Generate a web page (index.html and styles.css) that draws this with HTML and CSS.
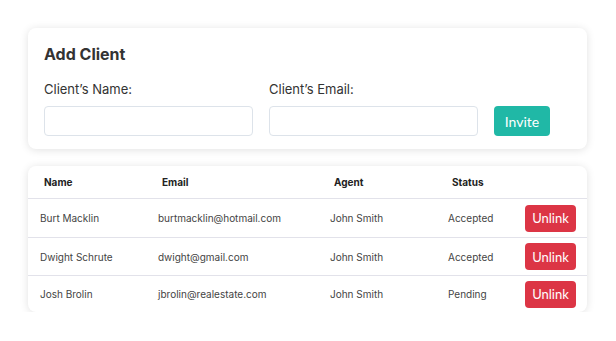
FILE: index.html
```html
<!DOCTYPE html>
<html lang="en">
<head>
<meta charset="UTF-8" /><meta name="viewport"
content="width=device-width, initial-scale=1.0" />
<title>Clients</title>
<link rel="stylesheet" href="styles.css">
</head>
<body>
<div class="card add">
<h2>Add Client</h2>
<div class="form">
<label class="field">Client’s Name:<input type="text"></label>
<label class="field">Client’s Email:<input type="email"></label>
<button class="btn invite">Invite</button>
</div>
</div>
<div class="card list">
<table>
<colgroup><col class="c-name"><col class="c-email"><col class="c-agent"><col class="c-status"><col></colgroup>
<thead>
<tr><th>Name</th><th>Email</th><th>Agent</th><th>Status</th><th></th></tr>
</thead>
<tbody>
<tr><td>Burt Macklin</td><td>burtmacklin@hotmail.com</td><td>John Smith</td><td>Accepted</td><td><button class="btn unlink">Unlink</button></td></tr>
<tr><td>Dwight Schrute</td><td>dwight@gmail.com</td><td>John Smith</td><td>Accepted</td><td><button class="btn unlink">Unlink</button></td></tr>
<tr><td>Josh Brolin</td><td>jbrolin@realestate.com</td><td>John Smith</td><td>Pending</td><td><button class="btn unlink">Unlink</button></td></tr>
</tbody>
</table>
</div>
</body>
</html>
```
FILE: styles.css
```css
body { margin: 0; padding: 28px 29px 0 28px; background: #fff; font-family: Inter, "Noto Sans", sans-serif; color: #333; }
.card { background: #fff; border-radius: 8px; box-shadow: 0 1px 8px rgba(0,0,0,0.12); }
.add { padding: 16px 16px 14px; height: 121px; box-sizing: border-box; }
.add h2 { margin: 0; font-size: 16px; font-weight: 700; line-height: 20px; color: #333; }
.form { display: flex; align-items: flex-end; margin-top: 17px; }
.field { display: flex; flex-direction: column; gap: 9px; width: 209px; margin-right: 16px; font-size: 13px; line-height: 16px; color: #333; }
.field input { height: 30px; box-sizing: border-box; border: 1px solid #dde3ea; border-radius: 4px; padding: 0 8px; font-size: 13px; }
.btn { border: none; color: #fff; font-family: Lato, sans-serif; cursor: pointer; border-radius: 4px; }
.invite { background: #20b8a6; width: 56px; height: 30px; font-size: 14px; padding: 0; }
.list { margin-top: 17px; overflow: hidden; }
table { width: 100%; border-collapse: collapse; table-layout: fixed; font-size: 10px; }
th { text-align: left; font-weight: 700; color: #222; height: 32px; padding: 0 0 0 16px; border-bottom: 1px solid #e2e2ea; }
td { height: 38px; padding: 0 0 0 12px; color: #444; border-bottom: 1px solid #e2e2ea; white-space: nowrap; }
tbody tr:nth-child(2) td { height: 37px; }
tbody tr:last-child td { border-bottom: none; height: 36px; }
.c-name { width: 118px; }
.c-email { width: 172px; }
.c-agent { width: 118px; }
.c-status { width: 76px; }
td:last-child { padding: 0 11px 0 0; text-align: right; }
.unlink { background: #dc3545; width: 51px; height: 27px; font-size: 13px; padding: 0; }
```
